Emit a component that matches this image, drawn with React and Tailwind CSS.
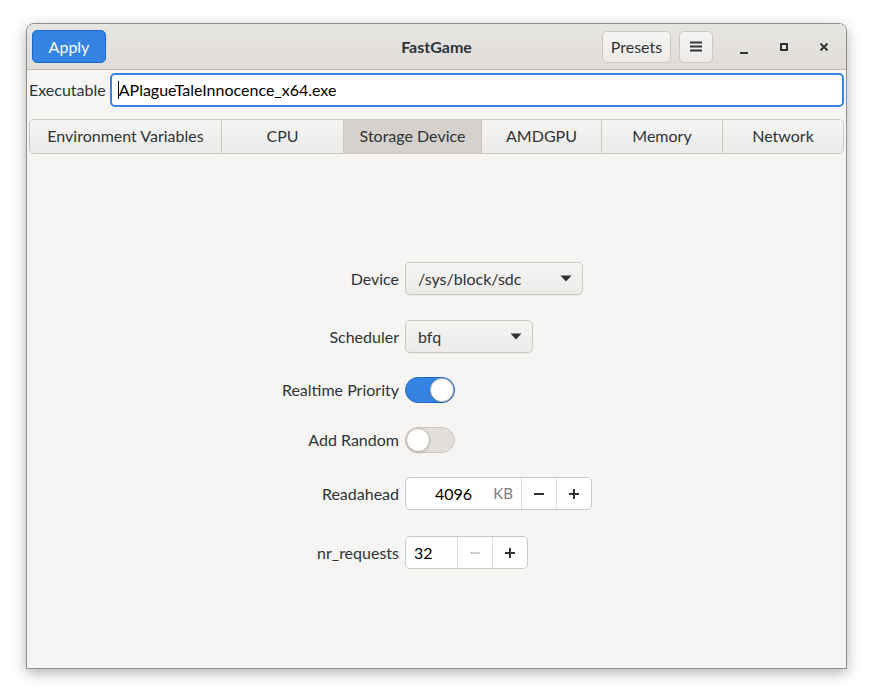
import { useState } from 'react';

const tabs = ['Environment Variables', 'CPU', 'Storage Device', 'AMDGPU', 'Memory', 'Network'];
const tabWidths = ['w-[191px]', 'w-[122px]', 'w-[138px]', 'w-[120px]', 'w-[121px]', 'flex-1'];

function Dropdown({ value, width }) {
    return (
        <div className={`${width} h-[33px] flex items-center justify-between pl-[12px] pr-[10px] rounded-[5px] border border-[#cdc7c2] bg-gradient-to-b from-[#f6f5f4] to-[#edebe9] shadow-[0_1px_0_rgba(0,0,0,0.05)]`}>
            <span>{value}</span>
            <svg width="12" height="7" viewBox="0 0 12 7"><path d="M0.5 0.5 L11.5 0.5 L6 6.5 Z" fill="#2e3436" /></svg>
        </div>
    );
}

function Switch({ on, onToggle }) {
    return (
        <button
            onClick={onToggle}
            className={`w-[50px] h-[26px] rounded-full border flex items-center p-0 ${on ? 'bg-[#3584e4] border-[#1b6acb] justify-end' : 'bg-[#e1dedb] border-[#cdc7c2] justify-start'}`}
        >
            <span className="w-[24px] h-[24px] rounded-full bg-white border border-[#bfb8b1] shadow-[0_1px_2px_rgba(0,0,0,0.15)]" />
        </button>
    );
}

function StepButton({ label, disabled }) {
    return (
        <div className={`w-[35px] h-full flex items-center justify-center border-l border-[#e3e0dd] ${disabled ? 'text-[#d0cdca]' : 'text-[#2e3436]'}`}>
            <svg width="12" height="12" viewBox="0 0 12 12">
                <path d="M1 6 H11" stroke="currentColor" strokeWidth="2" />
                {label === '+' && <path d="M6 1 V11" stroke="currentColor" strokeWidth="2" />}
            </svg>
        </div>
    );
}

function Row({ label, children, className = '' }) {
    return (
        <div className={`flex items-center gap-[6px] ${className}`}>
            <div className="w-[118px] text-right whitespace-nowrap">{label}</div>
            {children}
        </div>
    );
}

export default function App() {
    const [realtime, setRealtime] = useState(true);
    const [addRandom, setAddRandom] = useState(false);
    const [active, setActive] = useState(2);

    return (
        <div className="w-[873px] h-[698px] bg-white pt-[23px] pl-[26px] text-[16px] text-[#2e3436]" style={{ fontFamily: 'Lato, "Noto Sans", sans-serif' }}>
            <div className="w-[821px] h-[646px] flex flex-col rounded-t-[8px] border border-[#8f8f8f] bg-[#f6f5f4] shadow-[0_4px_14px_rgba(0,0,0,0.3)] overflow-hidden">
                {/* Header bar */}
                <div className="h-[46px] shrink-0 flex items-center px-[5px] bg-gradient-to-b from-[#e8e6e3] to-[#dedbd8] border-b border-[#bfb8b1] relative">
                    <button className="w-[74px] h-[33px] rounded-[5px] bg-[#3584e4] border border-[#1b6acb] text-white">Apply</button>
                    <div className="absolute left-0 right-0 text-center font-bold pointer-events-none">FastGame</div>
                    <div className="ml-auto flex items-center">
                        <button className="w-[69px] h-[32px] rounded-[5px] border border-[#cdc7c2] bg-gradient-to-b from-[#f6f5f4] to-[#edebe9]">Presets</button>
                        <button className="ml-[8px] w-[34px] h-[32px] rounded-[5px] border border-[#cdc7c2] bg-gradient-to-b from-[#f6f5f4] to-[#edebe9] flex items-center justify-center">
                            <svg width="12" height="11" viewBox="0 0 12 11"><path d="M0 1.5 H12 M0 5.5 H12 M0 9.5 H12" stroke="#2e3436" strokeWidth="2" /></svg>
                        </button>
                        <div className="ml-[27px] w-[8px] h-[8px] flex items-end mt-[6px]">
                            <div className="w-[8px] h-[2px] bg-[#2e3436]" />
                        </div>
                        <div className="ml-[32px] w-[8px] h-[8px] border-2 border-[#2e3436]" />
                        <svg className="ml-[32px] mr-[13px]" width="8" height="8" viewBox="0 0 8 8"><path d="M0.5 0.5 L7.5 7.5 M7.5 0.5 L0.5 7.5" stroke="#2e3436" strokeWidth="2" /></svg>
                    </div>
                </div>

                {/* Executable row */}
                <div className="flex items-center px-[2px] pt-[3px]">
                    <span>Executable</span>
                    <div className="ml-[4px] flex-1 h-[34px] rounded-[5px] border-2 border-[#3584e4] bg-white flex items-center pl-[6px] text-black">
                        <span className="w-px h-[18px] bg-black" />APlagueTaleInnocence_x64.exe
                    </div>
                </div>

                {/* Tabs */}
                <div className="mx-[2px] mt-[12px] h-[35px] flex rounded-[5px] border border-[#cdc7c2] overflow-hidden">
                    {tabs.map((t, i) => (
                        <button
                            key={t}
                            onClick={() => setActive(i)}
                            className={`${tabWidths[i]} h-full flex items-center justify-center pb-[1px] ${i > 0 ? 'border-l border-[#cdc7c2]' : ''} ${active === i ? 'bg-[#d6d1cd]' : 'bg-gradient-to-b from-[#f6f5f4] to-[#edebe9]'}`}
                        >
                            {t}
                        </button>
                    ))}
                </div>

                {/* Storage form */}
                <div className="mx-auto w-[311px] pt-[108px]">
                    <Row label="Device">
                        <Dropdown value="/sys/block/sdc" width="w-[178px]" />
                    </Row>
                    <Row label="Scheduler" className="mt-[25px]">
                        <Dropdown value="bfq" width="w-[128px]" />
                    </Row>
                    <Row label="Realtime Priority" className="mt-[24px]">
                        <Switch on={realtime} onToggle={() => setRealtime(!realtime)} />
                    </Row>
                    <Row label="Add Random" className="mt-[24px]">
                        <Switch on={addRandom} onToggle={() => setAddRandom(!addRandom)} />
                    </Row>
                    <Row label="Readahead" className="mt-[24px]">
                        <div className="w-[187px] h-[33px] flex items-center rounded-[5px] border border-[#cdc7c2] bg-white overflow-hidden">
                            <div className="flex-1 flex items-center pl-[29px] pr-[8px] text-black">
                                <span>4096</span>
                                <span className="ml-auto text-[15px] text-[#7b7e80]">KB</span>
                            </div>
                            <StepButton label="-" />
                            <StepButton label="+" />
                        </div>
                    </Row>
                    <Row label="nr_requests" className="mt-[26px]">
                        <div className="w-[123px] h-[33px] flex items-center rounded-[5px] border border-[#cdc7c2] bg-white overflow-hidden">
                            <div className="flex-1 pl-[8px] text-black">32</div>
                            <StepButton label="-" disabled />
                            <StepButton label="+" />
                        </div>
                    </Row>
                </div>
            </div>
        </div>
    );
}
